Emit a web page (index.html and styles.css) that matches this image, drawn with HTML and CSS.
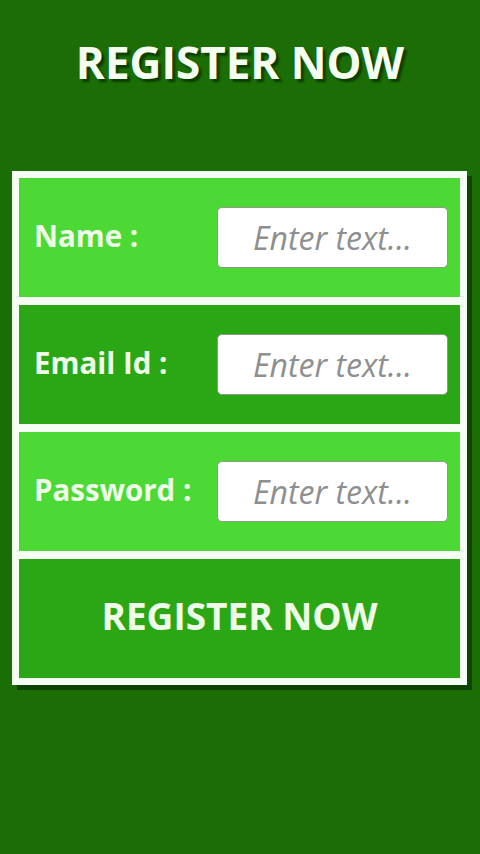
FILE: index.html
```html
<!DOCTYPE html>
<html lang="en">
<head>
    <meta charset="UTF-8">
    <meta name="viewport" content="width=device-width, initial-scale=1.0">
    <title>Register</title>
    <link rel="stylesheet" href="styles.css">
</head>
<body>
    <h1 class="title">REGISTER NOW</h1>
    <form class="panel">
        <div class="row light">
            <label class="label" for="name">Name :</label>
            <input class="field" id="name" type="text" placeholder="Enter text...">
        </div>
        <div class="row dark">
            <label class="label" for="email">Email Id :</label>
            <input class="field" id="email" type="text" placeholder="Enter text...">
        </div>
        <div class="row light">
            <label class="label" for="pass">Password :</label>
            <input class="field" id="pass" type="text" placeholder="Enter text...">
        </div>
        <button class="row dark submit" type="button">REGISTER NOW</button>
    </form>
</body>
</html>
```

FILE: styles.css
```css
body {
    margin: 0;
    height: 854px;
    background: #1b6d05;
    font-family: "Open Sans", "Liberation Sans", sans-serif;
}

.title {
    margin: 0;
    padding-top: 32px;
    height: 171px;
    box-sizing: border-box;
    font-size: 44px;
    line-height: 60px;
    font-weight: bold;
    text-align: center;
    color: #f4fff0;
    text-shadow: 3px 3px 2px #0c3d02;
}

.panel {
    display: flex;
    flex-direction: column;
    gap: 8px;
    width: 455px;
    margin-left: 12px;
    padding: 7px;
    box-sizing: border-box;
    background: #f6fff4;
    box-shadow: 5px 5px 0 #0d4303;
}

.row {
    display: flex;
    align-items: center;
    height: 119px;
    padding: 0 12px 0 15px;
}

.light {
    background: #4cd936;
}

.dark {
    background: #2ba715;
}

.label {
    flex: 1;
    padding-bottom: 4px;
    font-size: 29.5px;
    font-weight: bold;
    color: #effbe9;
}

.field {
    width: 231px;
    height: 61px;
    box-sizing: border-box;
    border: 1px solid #8d9a88;
    border-radius: 5px;
    background: #fff;
    font-family: "Open Sans", sans-serif;
    font-size: 32px;
    font-style: italic;
    text-align: center;
    color: #777;
}

.field::placeholder {
    color: #8f8f8f;
}

.submit {
    justify-content: center;
    padding: 0 0 6px;
    border: none;
    font-family: "Open Sans", sans-serif;
    font-size: 37px;
    font-weight: bold;
    color: #effbe9;
}
```
